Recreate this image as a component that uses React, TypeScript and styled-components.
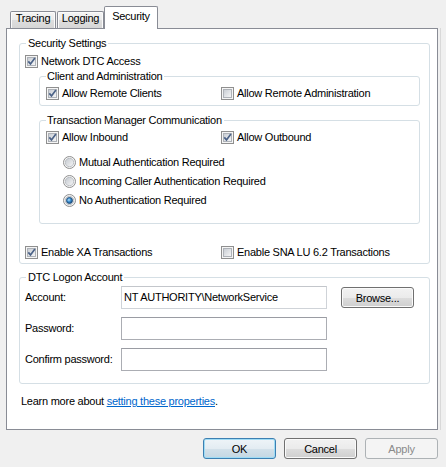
import React, { useId } from "react";
import styled, { createGlobalStyle } from "styled-components";

const GlobalStyle = createGlobalStyle`
  html, body { margin: 0; padding: 0; background: #f0f0f0; }
  body {
    font-family: "Liberation Sans", Arial, sans-serif;
    font-size: 11px;
    line-height: 13px;
    letter-spacing: -0.25px;
    color: #000;
  }
`;

const Dialog = styled.div`
  box-sizing: border-box;
  width: 446px;
  height: 467px;
  padding: 6px 8px 0 6px;
  display: flex;
  flex-direction: column;
`;

const TabStrip = styled.div`
  display: flex;
  align-items: flex-end;
  height: 22px;
  padding-left: 4px;
`;

const Tab = styled.div<{ $active?: boolean; $w: number; $gap?: number }>`
  box-sizing: border-box;
  width: ${(p) => p.$w}px;
  height: ${(p) => (p.$active ? 23 : 17)}px;
  margin-right: ${(p) => p.$gap ?? 0}px;
  margin-bottom: ${(p) => (p.$active ? -1 : 0)}px;
  border: 1px solid #898c95;
  border-bottom: none;
  border-radius: 2px 2px 0 0;
  background: ${(p) =>
    p.$active ? "#fff" : "linear-gradient(#f4f4f4 0%, #ebebeb 50%, #dedede 51%, #d6d6d6 100%)"};
  box-shadow: ${(p) => (p.$active ? "none" : "inset 1px 1px 0 #fbfbfb, inset -1px 0 0 #fbfbfb")};
  display: flex;
  justify-content: center;
  padding-top: ${(p) => (p.$active ? 3 : 0)}px;
  position: relative;
  z-index: ${(p) => (p.$active ? 2 : 0)};
`;

const Panel = styled.div`
  box-sizing: border-box;
  width: 432px;
  height: 402px;
  background: #fff;
  border: 1px solid #898c95;
  box-shadow: 2px 0 0 #f0f0f0, 3px 0 0 #d9d9d9;
  padding: 8px 7px 0 12px;
  display: flex;
  flex-direction: column;
  position: relative;
  z-index: 1;
`;

const Group = styled.fieldset<{ $mt?: number; $pt: number; $pb: number; $pl: number; $pr: number; $ml?: number }>`
  margin: ${(p) => p.$mt ?? 0}px 0 0 ${(p) => p.$ml ?? 0}px;
  padding: ${(p) => p.$pt}px ${(p) => p.$pr}px ${(p) => p.$pb}px ${(p) => p.$pl}px;
  border: 1px solid #d5dfe5;
  border-radius: 3px;
  min-width: 0;
  display: flex;
  flex-direction: column;
`;

const Legend = styled.legend`
  padding: 0 2px;
  margin-left: 1px;
  line-height: 13px;
`;

const SubLegend = styled.legend`
  padding: 0 2px 0 1px;
  line-height: 13px;
`;

const TwoCol = styled.div<{ $first: number; $mt?: number }>`
  display: grid;
  grid-template-columns: ${(p) => p.$first}px 1fr;
  margin-top: ${(p) => p.$mt ?? 0}px;
`;

const OptionRow = styled.label<{ $mt?: number }>`
  display: flex;
  align-items: center;
  gap: 3px;
  height: 13px;
  margin-top: ${(p) => p.$mt ?? 0}px;
  white-space: nowrap;
`;

const RadioList = styled.div`
  display: flex;
  flex-direction: column;
  gap: 6px;
  margin: 12px 0 0 17px;
`;

const Glyph = styled.svg`
  flex: none;
  display: block;
`;

const Checkbox: React.FC<{ checked?: boolean }> = ({ checked }) => {
  const id = useId().replace(/:/g, "");
  return (
    <Glyph width="13" height="13" viewBox="0 0 13 13">
      <defs>
        <linearGradient id={`cb${id}`} x1="0" y1="0" x2="1" y2="1">
          <stop offset="0" stopColor="#c6cbd2" />
          <stop offset="1" stopColor="#f8f8f8" />
        </linearGradient>
      </defs>
      <rect x="0.5" y="0.5" width="12" height="12" fill="#f5f5f5" stroke="#8f8f8f" />
      <rect x="2.5" y="2.5" width="8" height="8" fill={`url(#cb${id})`} stroke="#aeb2b8" />
      {checked && (
        <path d="M3.3 6.4 L5.5 8.9 L9.9 3.1" fill="none" stroke="#4b6287" strokeWidth="1.7" />
      )}
    </Glyph>
  );
};

const Radio: React.FC<{ checked?: boolean }> = ({ checked }) => {
  const id = useId().replace(/:/g, "");
  return (
    <Glyph width="13" height="13" viewBox="0 0 13 13">
      <defs>
        <linearGradient id={`rb${id}`} x1="0" y1="0" x2="1" y2="1">
          <stop offset="0" stopColor="#c3c8cf" />
          <stop offset="1" stopColor="#f7f7f7" />
        </linearGradient>
        <radialGradient id={`rd${id}`} cx="0.4" cy="0.4" r="0.6">
          <stop offset="0" stopColor="#b9e2fb" />
          <stop offset="0.5" stopColor="#3c8fd0" />
          <stop offset="1" stopColor="#174f87" />
        </radialGradient>
      </defs>
      <circle cx="6.5" cy="6.5" r="6" fill="#f4f4f4" stroke="#8f8f8f" />
      <circle cx="6.5" cy="6.5" r="4.2" fill={`url(#rb${id})`} stroke="#b3b7bd" strokeWidth="0.8" />
      {checked && <circle cx="6.5" cy="6.5" r="3" fill={`url(#rd${id})`} stroke="#1c4b78" strokeWidth="0.8" />}
    </Glyph>
  );
};

const Check: React.FC<{ checked?: boolean; mt?: number; children: React.ReactNode }> = ({ checked, mt, children }) => (
  <OptionRow $mt={mt}>
    <Checkbox checked={checked} />
    <span>{children}</span>
  </OptionRow>
);

const Option: React.FC<{ checked?: boolean; children: React.ReactNode }> = ({ checked, children }) => (
  <OptionRow>
    <Radio checked={checked} />
    <span>{children}</span>
  </OptionRow>
);

const FormGrid = styled.div`
  display: grid;
  grid-template-columns: 96px 206px 1fr;
  row-gap: 8px;
  align-items: center;
`;

const FieldLabel = styled.span`
  white-space: nowrap;
`;

const TextBox = styled.div<{ $light?: boolean }>`
  box-sizing: border-box;
  height: 23px;
  border: 1px solid ${(p) => (p.$light ? "#cfd3d8" : "#abadb3")};
  border-top-color: ${(p) => (p.$light ? "#c3c6cb" : "#9a9ca3")};
  background: #fff;
  padding: 0 2px;
  display: flex;
  align-items: center;
  white-space: nowrap;
`;

const Button = styled.button<{ $variant?: "default" | "disabled"; $ml?: number }>`
  box-sizing: border-box;
  width: 73px;
  height: 21px;
  margin-left: ${(p) => p.$ml ?? 0}px;
  padding: 0;
  font-family: inherit;
  font-size: 11px;
  letter-spacing: -0.25px;
  color: ${(p) => (p.$variant === "disabled" ? "#8a8a8a" : "#000")};
  border-radius: 3px;
  border: 1px solid
    ${(p) => (p.$variant === "default" ? "#3c7fb1" : p.$variant === "disabled" ? "#adb2b5" : "#707070")};
  background: ${(p) =>
    p.$variant === "default"
      ? "linear-gradient(#eef4f8 0%, #e3ecf2 50%, #d3e1ea 51%, #c4d7e3 100%)"
      : p.$variant === "disabled"
      ? "#f4f4f4"
      : "linear-gradient(#f2f2f2 0%, #ebebeb 50%, #dddddd 51%, #cfcfcf 100%)"};
  box-shadow: ${(p) =>
    p.$variant === "default"
      ? "inset 0 0 0 1px #9fdcf5"
      : p.$variant === "disabled"
      ? "none"
      : "inset 0 0 0 1px #fafafa"};
`;

const LearnMore = styled.div`
  margin: 11px 0 0 2px;
`;

const Link = styled.a`
  color: #0066cc;
  text-decoration: underline;
`;

const ButtonBar = styled.div`
  display: flex;
  justify-content: flex-end;
  gap: 8px;
  margin-top: 8px;
`;

export default function App() {
  return (
    <>
      <GlobalStyle />
      <Dialog>
        <TabStrip>
          <Tab $w={46} $gap={1}>Tracing</Tab>
          <Tab $w={47}>Logging</Tab>
          <Tab $w={54} $active>
            Security
          </Tab>
        </TabStrip>
        <Panel>
          <Group $pt={5} $pb={4} $pl={5} $pr={9}>
            <Legend>Security Settings</Legend>
            <Check checked>Network DTC Access</Check>
            <Group $mt={2} $ml={14} $pt={4} $pb={5} $pl={6} $pr={0}>
              <SubLegend>Client and Administration</SubLegend>
              <TwoCol $first={175}>
                <Check checked>Allow Remote Clients</Check>
                <Check>Allow Remote Administration</Check>
              </TwoCol>
            </Group>
            <Group $mt={8} $ml={14} $pt={4} $pb={16} $pl={6} $pr={0}>
              <SubLegend>Transaction Manager Communication</SubLegend>
              <TwoCol $first={175}>
                <Check checked>Allow Inbound</Check>
                <Check checked>Allow Outbound</Check>
              </TwoCol>
              <RadioList>
                <Option>Mutual Authentication Required</Option>
                <Option>Incoming Caller Authentication Required</Option>
                <Option checked>No Authentication Required</Option>
              </RadioList>
            </Group>
            <TwoCol $first={196} $mt={22}>
              <Check checked>Enable XA Transactions</Check>
              <Check>Enable SNA LU 6.2 Transactions</Check>
            </TwoCol>
          </Group>
          <Group $mt={7} $pt={2} $pb={12} $pl={5} $pr={9}>
            <Legend>DTC Logon Account</Legend>
            <FormGrid>
              <FieldLabel>Account:</FieldLabel>
              <TextBox $light>NT AUTHORITY\NetworkService</TextBox>
              <Button $ml={14}>Browse...</Button>
              <FieldLabel>Password:</FieldLabel>
              <TextBox />
              <span />
              <FieldLabel>Confirm password:</FieldLabel>
              <TextBox />
              <span />
            </FormGrid>
          </Group>
          <LearnMore>
            Learn more about <Link href="#">setting these properties</Link>.
          </LearnMore>
        </Panel>
        <ButtonBar>
          <Button $variant="default">OK</Button>
          <Button>Cancel</Button>
          <Button $variant="disabled">Apply</Button>
        </ButtonBar>
      </Dialog>
    </>
  );
}
